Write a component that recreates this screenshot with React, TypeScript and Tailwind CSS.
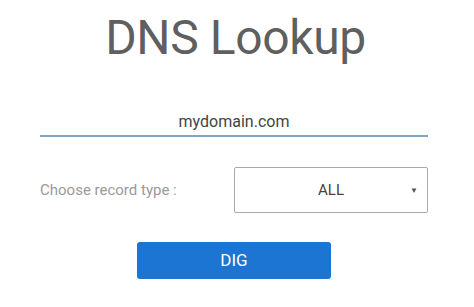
import React, { useState } from 'react';

export default function App() {
    const [domain, setDomain] = useState('mydomain.com');
    const [recordType, setRecordType] = useState('ALL');

    return (
        <div className="w-[474px] h-[307px] bg-white flex flex-col items-center" style={{ fontFamily: 'Roboto, "Open Sans", sans-serif' }}>
            <h1 className="mt-[9px] ml-[-3px] text-[48px] leading-[58px] text-[#5f5f5f] font-normal tracking-[-0.4px]">DNS Lookup</h1>

            <div className="mt-[40px] w-[388px] ml-[-6px]">
                <input
                    value={domain}
                    onChange={e => setDomain(e.target.value)}
                    className="w-full h-[30px] text-center text-[16px] text-[#444] border-b-2 border-[#7fa6c8] outline-none bg-transparent"
                />
            </div>

            <div className="mt-[30px] w-[388px] ml-[-6px] flex items-center justify-between">
                <span className="text-[15px] text-[#9a9a9a]">Choose record type :</span>
                <div className="relative w-[194px] h-[46px] border border-[#aaaaaa] rounded-[2px] flex items-center justify-center">
                    <select
                        value={recordType}
                        onChange={e => setRecordType(e.target.value)}
                        className="appearance-none w-full h-full text-center text-[15px] text-[#444] bg-transparent outline-none"
                    >
                        <option>ALL</option>
                        <option>A</option>
                        <option>AAAA</option>
                        <option>MX</option>
                        <option>TXT</option>
                    </select>
                    <span className="absolute right-[9px] top-[17px] text-[8px] text-[#555] pointer-events-none">▼</span>
                </div>
            </div>

            <button className="mt-[29px] w-[194px] h-[37px] bg-[#1c74d3] rounded-[3px] text-white text-[17px] ml-[-6px]">
                DIG
            </button>
        </div>
    );
}
